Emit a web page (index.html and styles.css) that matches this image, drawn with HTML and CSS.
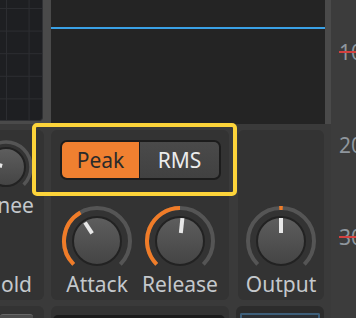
FILE: index.html
```html
<!DOCTYPE html>
<html>

<head>
    <title>Compressor</title>
    <link rel="stylesheet" href="styles.css">
</head>

<body>
    <div class="app">
        <div class="main">
            <div class="top">
                <div class="graph"></div>
                <div class="display">
                    <div class="trace"></div>
                </div>
            </div>

            <div class="controls">
                <div class="panel side">
                    <div class="knob-group">
                        <svg class="knob" viewBox="0 0 56 56" width="56" height="56">
                            <path class="track thin" d="M10.32 45.68A25 25 0 1 1 45.68 45.68" />
                            <path class="fill thin" d="M10.32 45.68A25 25 0 0 1 3.85 21.53" />
                            <circle class="cap" cx="28" cy="28" r="19" />
                            <line class="ptr" x1="24.14" y1="26.96" x2="10.61" y2="23.34" />
                        </svg>
                        <span class="knob-label knee">Knee</span>
                    </div>
                    <span class="knob-label thresh">Threshold</span>
                </div>

                <div class="panel dyn">
                    <div class="seg">
                        <button class="seg-btn on">Peak</button>
                        <button class="seg-btn">RMS</button>
                    </div>
                    <div class="knob-row">
                        <div class="knob-group">
                            <svg class="knob" viewBox="0 0 72 72" width="72" height="72">
                                <defs>
                                    <linearGradient id="capfill" x1="0" y1="0" x2="0" y2="1">
                                        <stop offset="0" stop-color="#5e5e5e" />
                                        <stop offset="1" stop-color="#444444" />
                                    </linearGradient>
                                </defs>
                                <path class="track" d="M12.67 59.33A33 33 0 1 1 59.33 59.33" />
                                <path class="fill" d="M12.67 59.33A33 33 0 0 1 19.5 7.42" />
                                <circle class="cap" cx="36" cy="36" r="24" />
                                <line class="ptr" x1="31.1" y1="28.45" x2="24" y2="17.5" />
                            </svg>
                            <span class="knob-label">Attack</span>
                        </div>
                        <div class="knob-group">
                            <svg class="knob" viewBox="0 0 72 72" width="72" height="72">
                                <path class="track" d="M12.67 59.33A33 33 0 1 1 59.33 59.33" />
                                <path class="fill" d="M12.67 59.33A33 33 0 0 1 36 3" />
                                <circle class="cap" cx="36" cy="36" r="24" />
                                <line class="ptr" x1="36.84" y1="28.04" x2="38.4" y2="13.13" />
                            </svg>
                            <span class="knob-label">Release</span>
                        </div>
                    </div>
                </div>

                <div class="panel out">
                    <div class="knob-group">
                        <svg class="knob" viewBox="0 0 72 72" width="72" height="72">
                            <path class="track" d="M12.67 59.33A33 33 0 1 1 59.33 59.33" />
                            <path class="fill" d="M34.27 3.05A33 33 0 0 1 37.73 3.05" />
                            <circle class="cap" cx="36" cy="36" r="24" />
                            <line class="ptr" x1="36" y1="28" x2="36" y2="13" />
                        </svg>
                        <span class="knob-label">Output</span>
                    </div>
                </div>
            </div>

            <div class="bottom">
                <div class="panel-b side-b"><div class="chip"></div></div>
                <div class="panel-b dyn-b"><div class="well"></div></div>
                <div class="panel-b out-b"><div class="meter"></div></div>
            </div>
        </div>

        <div class="scale">
            <span class="tick marked">10</span>
            <span class="tick">20</span>
            <span class="tick marked">30</span>
        </div>

        <!-- highlight around the detector mode switch -->
        <div class="focus"></div>
    </div>
</body>

</html>
```

FILE: styles.css
```css
body {
    margin: 0;
    background: #3c3c3c;
    font-family: 'Noto Sans', sans-serif;
    overflow: hidden;
}

.app {
    display: flex;
    width: 356px;
    height: 318px;
    position: relative;
    overflow: hidden;
}

.main {
    width: 331px;
    flex: none;
    background: #3a3a3a;
}

.top {
    display: flex;
    gap: 8px;
    height: 124px;
    padding-right: 6px;
    background: #4a4a4a;
}

.graph {
    width: 43px;
    height: 121px;
    box-sizing: border-box;
    background-color: #1e1f22;
    background-image:
        linear-gradient(to right, #2c2d31 1px, transparent 1px),
        linear-gradient(to bottom, #2c2d31 1px, transparent 1px);
    background-size: 22.6px 22.6px;
    background-position: 6px 8px;
    border-right: 1px solid #303134;
    border-bottom: 1px solid #303134;
    border-radius: 0 0 4px 0;
}

.display {
    flex: 1;
    background: #242424;
    padding-top: 27px;
}

.trace {
    height: 2px;
    background: #3aa1e6;
}

.controls {
    display: flex;
    gap: 7px;
    padding-top: 6px;
}

.panel {
    height: 170px;
    box-sizing: border-box;
    background: #333;
    border-radius: 6px;
    display: flex;
    flex-direction: column;
}

.side {
    margin-left: -96px;
    width: 140px;
    flex: none;
    align-items: flex-end;
    padding: 9px 10px 4px 0;
}

.dyn {
    width: 178px;
    flex: none;
    padding: 10px 8px 4px 9px;
}

.out {
    width: 86px;
    flex: none;
    margin-left: 2px;
    justify-content: flex-end;
    align-items: center;
    padding-bottom: 4px;
}

.seg {
    display: flex;
    gap: 1px;
    width: 161px;
    height: 40px;
    box-sizing: border-box;
    border: 2px solid #1c1c1c;
    border-radius: 7px;
    background: #1c1c1c;
    overflow: hidden;
}

.seg-btn {
    font: inherit;
    font-size: 21px;
    border: none;
    padding: 0;
    flex: 1;
    color: #ececec;
    background: linear-gradient(#4a4a4a, #414141);
}

.seg-btn.on {
    flex: none;
    width: 77px;
    color: #2a2a2a;
    background: #f08030;
}

.knob-row {
    display: flex;
    justify-content: center;
    gap: 9px;
    margin-top: 25px;
    margin-left: -2px;
}

.knob-group {
    display: flex;
    flex-direction: column;
    align-items: center;
}

.knob {
    display: block;
}

.track,
.fill {
    fill: none;
    stroke-width: 4;
}

.track {
    stroke: #555;
}

.fill {
    stroke: #f07c28;
}

.thin {
    stroke-width: 3.5;
}

.cap {
    fill: url(#capfill);
    stroke: #222;
    stroke-width: 2;
}

.ptr {
    stroke: #e8e8e8;
    stroke-width: 4;
}

.knob-label {
    font-size: 21px;
    line-height: 24px;
    color: #c4c8cc;
    margin-top: -5px;
    white-space: nowrap;
}

.knee {
    margin-top: -2px;
    margin-left: 6px;
}

.thresh {
    margin-top: auto;
    margin-right: 2px;
}

.bottom {
    display: flex;
    gap: 7px;
    margin-top: 6px;
    height: 20px;
}

.panel-b {
    flex: none;
    background: #333;
    border-radius: 6px;
    box-sizing: border-box;
}

.side-b {
    margin-left: -96px;
    width: 140px;
    padding: 8px 0 0 96px;
}

.chip {
    width: 33px;
    height: 12px;
    background: #4c4c4c;
    border-top: 1px solid #666;
    border-radius: 3px 3px 0 0;
}

.dyn-b {
    width: 178px;
    padding: 9px 4px 0 2px;
}

.well {
    height: 12px;
    background: #1b1b1b;
    border-radius: 5px 5px 0 0;
}

.out-b {
    width: 88px;
    background: #2c2c2c;
    padding: 7px 4px 0 4px;
}

.meter {
    height: 12px;
    box-sizing: border-box;
    border: 2px solid #3e5f7a;
    border-bottom: none;
    background: #2b3035;
    border-radius: 2px 2px 0 0;
}

.scale {
    flex: 1;
    display: flex;
    flex-direction: column;
    align-items: flex-start;
    padding: 40px 0 0 8px;
    color: #8f969d;
    font-size: 21px;
    line-height: 24px;
}

.tick {
    position: relative;
}

.tick + .tick {
    margin-top: 69px;
}

.tick:last-child {
    margin-top: 68px;
}

.tick.marked::after {
    content: '';
    position: absolute;
    left: 0;
    right: -20px;
    top: 11px;
    height: 2px;
    background: #d4403f;
}

.focus {
    position: absolute;
    left: 32px;
    top: 123px;
    width: 205px;
    height: 73px;
    box-sizing: border-box;
    border: 4px solid #fdd43a;
    border-radius: 5px;
}
```
